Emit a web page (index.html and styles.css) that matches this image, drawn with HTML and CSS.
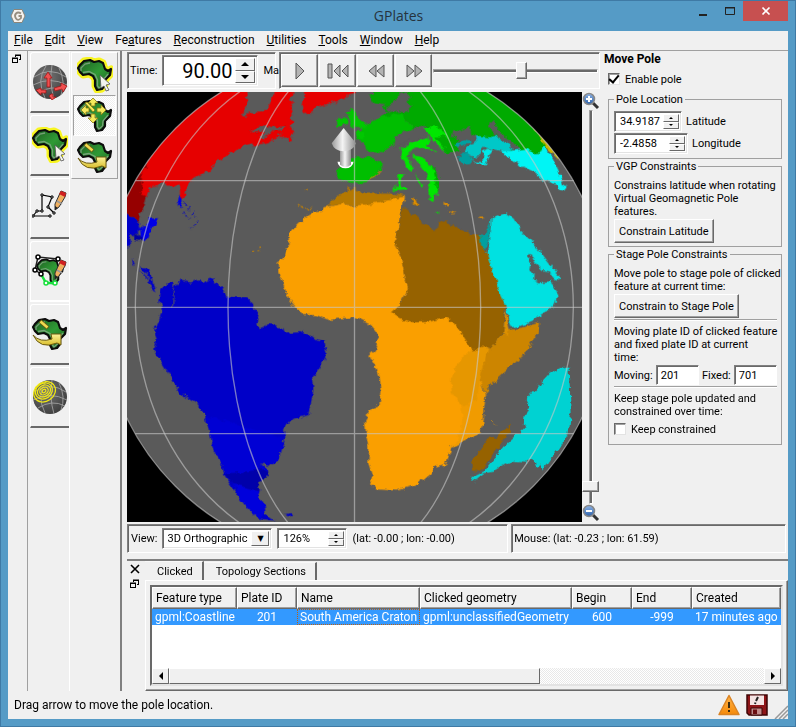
FILE: index.html
```html
<!DOCTYPE html>
<html lang="en">
<head>
<meta charset="utf-8">
<title>GPlates</title>
<link rel="stylesheet" href="styles.css">
</head>
<body>
<svg class="defs" aria-hidden="true">
  <defs>
    <linearGradient id="leaf" x1="0" y1="0" x2="1" y2="1"><stop offset="0" stop-color="#1f5e22"/><stop offset=".5" stop-color="#2f9a35"/><stop offset="1" stop-color="#1d5a20"/></linearGradient>
    <linearGradient id="gold" x1="0" y1="0" x2="0" y2="1"><stop offset="0" stop-color="#fbf39a"/><stop offset="1" stop-color="#d9bd2a"/></linearGradient>
    <linearGradient id="steel" x1="0" y1="0" x2="1" y2="0"><stop offset="0" stop-color="#9a9a9a"/><stop offset=".45" stop-color="#f4f4f4"/><stop offset="1" stop-color="#8c8c8c"/></linearGradient>
    <radialGradient id="ball" cx=".4" cy=".35" r=".7"><stop offset="0" stop-color="#777"/><stop offset="1" stop-color="#3c3c3c"/></radialGradient>
    <linearGradient id="lens" x1="0" y1="0" x2="0" y2="1"><stop offset="0" stop-color="#8db4e6"/><stop offset="1" stop-color="#2b5fa8"/></linearGradient>
    <linearGradient id="amber" x1="0" y1="0" x2="0" y2="1"><stop offset="0" stop-color="#ffb347"/><stop offset="1" stop-color="#f58a0a"/></linearGradient>
    <path id="africa" d="M3 8 L7 4 L13 3 L17 5 L22 4 L26 6 L28 12 L31 14 L34 12 L33 18 L28 23 L28 28 L25 32 L20 33 L18 29 L18 23 L16 19 L12 17 L6 18 L3 15 L1 11 Z"/>
    <g id="land"><use href="#africa" fill="url(#leaf)" stroke="#0c0c0c" stroke-width="2.200" stroke-linejoin="round"/><path d="M4 14 L4 11 L8 7 L13 6 M6 15.500 L12 14.500 L18 17.500 L20.500 23 L20.500 29 L22 31 L25.500 28 L26 23 L31 17" fill="none" stroke="#8fae90" stroke-opacity=".75" stroke-width="1.300"/></g>
    <g id="globe">
      <circle cx="18" cy="18" r="17" fill="url(#ball)"/>
      <g fill="none" stroke="#aaa" stroke-width=".8"><path d="M2 13 Q18 2 34 13M1 21 Q18 12 35 21M6 29 Q20 20 33 27M14 2 Q4 16 13 34M20 1 Q17 18 22 35M27 4 Q34 18 29 31"/></g>
    </g>
    <path id="pointer" d="M0 0 L10 9 L6 10 L9 15 L6 16 L4 11 L1 13 Z" fill="#f3f3ee" stroke="#555" stroke-width=".8"/>
    <g id="pencil"><path d="M29 1 L34 3 L33 7 L27 17 L23 20 L23 14 Z" fill="#f0b060" stroke="#333" stroke-width="1"/><path d="M29 1 L34 3 L33 7 L27 4 Z" fill="#d02020"/><path d="M25 11 L30 14" stroke="#999" stroke-width="1.5"/><path d="M23 16 L23 20 L26 18" fill="#222"/></g>
    <g id="africa-pick"><use href="#africa" fill="none" stroke="#f8f520" stroke-width="7" stroke-linejoin="round"/><use href="#land"/><use href="#pointer" x="23" y="18"/></g>
    <g id="africa-turn"><use href="#land"/><path d="M8 5 L16 12" stroke="#6b5a10" stroke-width="4"/><path d="M8.500 5.500 L15.500 11.500" stroke="#f0dc50" stroke-width="2.500"/><path d="M1 19 Q8 27 20 23 L19 18 H29 V29 L25 27 Q8 34 1 19Z" fill="url(#gold)" stroke="#6b5a10" stroke-width="1"/></g>
    <g id="restore" fill="none" stroke="#000"><path d="M3.500 3V1M3 1.500H9M3 1H9M8.500 1V6M9 5.500H7M.5 4V9M0 4.500H6M0 4H6M5.500 4V9M6 8.500H0"/></g>
  </defs>
</svg>
<div class="window">
  <header class="titlebar">
    <svg class="app-icon" viewBox="0 0 16 16"><path d="M4 1.500H12L15 8L12 14.500H4L1 8Z" fill="#f4f2ee" stroke="#8a857a"/><path d="M11 5.500Q8 3.500 6 5.500T6 10.500T11 10V8H8.500" fill="none" stroke="#968e80" stroke-width="1.800"/></svg>
    <h1>GPlates</h1>
    <div class="window-buttons">
      <button aria-label="Minimize"><svg viewBox="0 0 12 12"><path d="M2 10H10" stroke="#222" stroke-width="2"/></svg></button>
      <button aria-label="Maximize"><svg viewBox="0 0 12 12"><path d="M1.500 2V9.500H10.500V2M1 2.500H11M1 3H11" fill="none" stroke="#222"/></svg></button>
      <button class="close" aria-label="Close"><svg viewBox="0 0 12 12"><path d="M2.500 2.500L9.500 9.500M9.500 2.500L2.500 9.500" stroke="#fff" stroke-width="1.700"/></svg></button>
    </div>
  </header>
  <div class="client">
    <nav class="menubar">
      <a href="#"><u>F</u>ile</a><a href="#"><u>E</u>dit</a><a href="#"><u>V</u>iew</a><a href="#">Fe<u>a</u>tures</a><a href="#"><u>R</u>econstruction</a><a href="#"><u>U</u>tilities</a><a href="#"><u>T</u>ools</a><a href="#"><u>W</u>indow</a><a href="#"><u>H</u>elp</a>
    </nav>
    <div class="workspace">
      <aside class="tool-dock">
        <div class="dock-grip"><button aria-label="Float"><svg viewBox="0 0 10 10"><use href="#restore"/></svg></button></div>
        <div class="workflows">
          <button aria-label="View"><svg viewBox="0 0 36 36"><use href="#globe"/><g fill="#f05050" stroke="#a01818" stroke-width=".8"><path d="M15 23V14H12L16 8L20 14H18V23Z"/><path d="M22 24L29 22V19L35 22L31 28L30 25L23 27Z"/><path d="M14 26L9 26V24L4 26L9 31V29L14 29Z"/><path d="M19 30L21 30V33H24L20 36L17 32Z"/></g></svg></button>
          <button aria-label="Feature inspection"><svg viewBox="0 0 36 36"><use href="#africa-pick"/></svg></button>
          <button aria-label="Digitisation"><svg viewBox="0 0 36 36"><g fill="none" stroke="#000" stroke-width="1.200"><path d="M1 26H18M1 26L5 21H10V5L20 7L16 17L22 23"/></g><g fill="#fff" stroke="#000"><path d="M0 25h2v2h-2zM17 25h2v2h-2zM4 20h2v2h-2zM9 20h2v2h-2zM9 4h2v2h-2zM19 6h2v2h-2zM15 16h2v2h-2zM21 22h2v2h-2z"/></g><use href="#pencil"/></svg></button>
          <button class="current" aria-label="Topology"><svg viewBox="0 0 36 36"><use href="#land" transform="translate(4 4) scale(.8)"/><path d="M9 21L3 17L6 4L26 6" fill="none" stroke="#222" stroke-width="1.500"/><path d="M9 21L14 30H23" fill="none" stroke="#17e03c" stroke-width="2.500"/><g fill="#fff" stroke="#000" stroke-width="1.500"><circle cx="3" cy="17" r="2"/><circle cx="6" cy="4" r="2"/><circle cx="26" cy="6" r="2"/><circle cx="9" cy="21" r="2"/></g><g fill="#fff" stroke="#17e03c" stroke-width="1.500"><circle cx="14" cy="30" r="2"/><circle cx="23" cy="30" r="2"/></g><use href="#pencil" y="6"/></svg></button>
          <button aria-label="Pole manipulation"><svg viewBox="0 0 36 36"><use href="#africa-turn"/></svg></button>
          <button aria-label="Small circles"><svg viewBox="0 0 36 36"><use href="#globe"/><g fill="none" stroke="#f2ea10" stroke-width="1.200" transform="rotate(-35 12 12)"><ellipse cx="12" cy="12" rx="2" ry="1.500"/><ellipse cx="12" cy="12" rx="4.500" ry="3.500"/><ellipse cx="12" cy="12" rx="7" ry="5.500"/><ellipse cx="12" cy="12" rx="9" ry="7.500"/><ellipse cx="12" cy="13" rx="11.500" ry="9.500"/></g></svg></button>
        </div>
        <div class="tools">
          <div class="tool-list">
            <button aria-label="Choose feature"><svg viewBox="0 0 36 36"><use href="#africa-pick"/></svg></button>
            <button class="checked" aria-label="Move pole"><svg viewBox="0 0 36 36"><use href="#land"/><g fill="#f4ea5c" stroke="#857a10" stroke-width=".8"><path d="M16 0L21 5H18V8H14V5H11Z"/><path d="M16 25L21 20H18V16H14V20H11Z"/><path d="M4 12L9 7V10H12V14H9V17Z"/><path d="M29 12L24 7V10H20V14H24V17Z"/><path d="M8 5L10 4L18 12L16 14Z"/></g></svg></button>
            <button aria-label="Modify pole"><svg viewBox="0 0 36 36"><use href="#africa-turn"/></svg></button>
          </div>
        </div>
      </aside>
      <main class="center">
        <div class="upper">
          <div class="globe-side">
            <div class="timebar">
              <div class="sunken time-frame">
                <label for="time">Time:</label>
                <span class="spin spin-large"><input id="time" type="text" value="90.00"><span class="arrows"><button aria-label="Older"></button><button aria-label="Younger"></button></span></span>
                <span>Ma</span>
              </div>
              <div class="sunken play-frame">
                <button class="raised" aria-label="Play"><svg viewBox="0 0 30 20"><path d="M11 2V18L19 10Z"/></svg></button>
                <button class="raised" aria-label="Reset"><svg viewBox="0 0 30 20"><path d="M5 3H9V17H5ZM17 4V16L11 10ZM25 4V16L19 10Z"/></svg></button>
                <button class="raised" aria-label="Step back"><svg viewBox="0 0 30 20"><path d="M15 4V16L8 10ZM23 4V16L16 10Z"/></svg></button>
                <button class="raised" aria-label="Step forward"><svg viewBox="0 0 30 20"><path d="M8 4V16L15 10ZM16 4V16L23 10Z"/></svg></button>
                <input class="slider" type="range" min="0" max="100" value="54" aria-label="Time slider">
              </div>
            </div>
            <div class="map-row">
              <div class="map">
              <svg viewBox="3 6 1365 1290" preserveAspectRatio="xMidYMid slice" role="img" aria-label="Globe">
                <clipPath id="disc"><circle cx="685" cy="652" r="759"/></clipPath>
                <filter id="coast" filterUnits="userSpaceOnUse" x="-80" y="-80" width="1540" height="1460"><feTurbulence type="fractalNoise" baseFrequency=".05" numOctaves="3" seed="4"/><feDisplacementMap in="SourceGraphic" scale="20" xChannelSelector="R" yChannelSelector="G"/></filter>
                <circle cx="685" cy="652" r="759" fill="#5a5a5a"/>
                <g clip-path="url(#disc)">
                <g filter="url(#coast)">
                  <path fill="#e60000" d="M260 -20H360L366 15L357 25L370 35L352 60L348 78L362 80L372 66L400 68L418 62L430 45L438 25L450 -20H490L500 15L488 30L503 38L495 45L500 70L490 80L505 90L508 98L490 105L495 115L502 125L490 135L503 148L490 154L480 143L458 140L470 128L440 150L430 160L400 165L380 170V160L360 165L340 175L330 184L310 190L290 208L275 204L265 215L262 232L250 242L230 248L210 262L200 268L190 285L180 300L178 318L170 333L165 320V300L158 283L140 290L125 290L115 278L100 282L75 292L62 318L40 340L40 200Z"/>
                  <path fill="#5a5a5a" d="M368 130L390 115L410 106L440 112L480 108L470 118L455 122L440 120L428 134L412 145L400 140L415 124L395 120Z"/>
                  <path fill="#960000" d="M76 200L48 248L46 312L60 318L52 348L42 372L38 396L-20 350V250Z"/>
                  <path fill="#e60000" d="M532 -20H694L690 12L662 16L660 26L640 32L600 44L575 52L558 64L545 76L530 64L527 45L535 22Z"/>
                  <path fill="#0000c8" d="M-20 350L38 396L40 420L22 440L10 430L12 470L-20 475ZM18 505L26 518L22 530ZM36 536L55 552L70 570L62 566ZM45 530L60 532L76 560L88 610L72 590L70 565Z"/>
                  <path fill="#0000e6" d="M38 410L60 412L75 386L96 384L88 404L74 418L68 440L54 455L42 440ZM160 312L168 325L170 338L160 354L155 345Z"/>
                  <path fill="#0000a0" d="M26 430L46 440L50 454L28 450Z"/>
                  <path fill="none" stroke="#0000c8" stroke-width="4" stroke-dasharray="5 8" d="M176 340L192 350L175 372L190 386M202 368L212 398L196 414"/>
                  <path fill="#0000c8" d="M105 600L135 572L150 590L165 572L190 578L220 568L240 575L266 563L264 580L285 590L300 620L330 622L360 624L380 640L386 662L398 675L388 700L400 714L418 712L425 702L445 704L472 718L475 728L520 723L550 732L570 748L595 752L602 790L585 825L570 850L558 865L562 900L555 940L546 976L520 982L495 988L474 1015L478 1045L465 1075L458 1108L442 1125L405 1120L430 1140L426 1160L396 1170L388 1186L402 1198L396 1222L415 1240L418 1270L445 1292L400 1286L370 1260L345 1230L322 1195L295 1155L285 1120L262 1075L248 1020L235 970L218 945L185 925L158 905L130 855L92 795L85 780L92 750L85 722L98 690L108 665L100 632Z"/>
                  <path fill="#0000dc" opacity=".6" d="M240 975L475 1045L465 1075L458 1108L442 1125L400 1120L430 1140L300 1152L285 1120L262 1075Z"/>
                  <path fill="#0000aa" d="M295 1152L410 1138L430 1145L425 1160L396 1170L400 1205L320 1180Z"/>
                  <path fill="#0000dc" d="M325 1185L400 1205L396 1222L415 1240L418 1270L400 1286L370 1260L345 1230Z"/>
                  <path fill="none" stroke="#5a5a5a" stroke-width="3" d="M148 585L140 610L148 625L140 652M400 716L414 714L420 700"/>
                  <path fill="#0000c8" d="M480 1275L500 1272L498 1280L484 1282Z"/>

                  <path fill="#fa9f00" d="M608 350L592 352L585 365L560 368L540 380L515 400L490 428L492 460L480 480L472 505L455 515L457 545L465 565L475 590L485 620L500 640L530 675L570 675L610 690L650 684L685 683L705 690L735 705L752 725L757 745L747 780L730 795L752 835L760 860L767 900L760 945L737 955L717 990L720 1030L730 1070L727 1120L740 1160L732 1180L747 1198L812 1202L857 1188L892 1170L917 1150L927 1130L957 1122L970 1090L972 1075L1052 1035L1072 1000L1077 920L1062 875L1087 770L1120 640H822L847 600L827 510L807 455L837 318L760 335L690 345L640 343Z"/>
                  <path fill="#b47800" d="M608 348L615 330L640 315L660 305L668 290L672 303L688 292L690 304L720 308L790 308L837 318L770 334L710 345L640 343ZM858 325L872 332L878 346L870 350L858 338Z"/>
                  <path fill="#966200" d="M837 350L852 370L877 380L887 395L922 420L934 412L937 395L962 395L992 412L1032 430L1060 430L1072 470L1082 490L1102 545L1117 590L1140 655L1134 650L1132 725L1112 750L1097 773L1087 770L1039 782L1010 735L985 700L962 683L930 690L905 696L862 697L820 684L797 668L822 645L847 600L827 510L807 455L830 365Z"/>
                  <path fill="#cc8500" d="M1087 770L1097 773L1112 750L1132 728L1150 720L1200 710L1240 698L1235 730L1202 785L1162 820L1112 865L1077 908L1060 870L1067 830Z"/>
                  <path fill="#dc9000" d="M1138 655L1150 716L1150 735L1132 728Z"/>
                  <path fill="#e69700" d="M1039 782L1087 770L1062 870L1057 910L1047 930L1007 950L977 905L975 870L990 830L1017 795Z"/>
                  <path fill="#f09b00" d="M1007 950L1047 930L1064 875L1077 920L1072 1000L1052 1035L972 1075L992 1050L1012 1000Z"/>
                  <g transform="translate(672 630)">
                    <path fill="#966200" d="M365 490L375 470L400 440L410 420L440 410L480 375L482 390L460 425L430 460L395 510L380 515L365 510Z"/>
                    <path fill="#00d2d2" d="M363 532L400 515L460 440L530 375L515 372L518 350L526 345L532 330L538 318L530 300L565 260L600 220L630 202L655 200L660 270L662 350L655 400L630 445L600 480L580 508L578 492L556 502L550 478L530 488L480 485L430 515L400 520L370 545Z"/>
                    <path fill="none" stroke="#f09b00" stroke-width="3" stroke-dasharray="3 4" d="M404 280L412 300M426 362L438 376"/>
                  </g>
                  <g transform="translate(672 0)">
                    <path fill="#00e1e1" d="M425 385L465 370L490 385L515 425L545 455L575 490L605 530L628 555L628 570L608 566L604 578L625 610L615 640L600 660L575 672L555 692L530 702L485 712L475 680L468 650L445 600L430 550L410 490L420 450Z"/>
                    <path fill="#5a5a5a" d="M535 492L546 494L554 520L575 540L600 544L604 556L622 576L608 584L598 572L590 578L565 580L552 572L554 558L538 540L542 518L534 508Z"/>
                    <path fill="#00a0a0" d="M388 434L402 434L415 410L422 395L418 450L405 480L392 460Z"/>
                    <path fill="#00aa00" d="M55 15L75 10L85 -20H415L500 35L555 98L580 125L600 165L580 188L565 193L545 185L530 178L518 190L495 165L465 140L440 115L436 96L420 94L418 112L440 130L495 190L410 145L360 130L358 108L335 125L310 120L305 140L325 150L325 185L295 190L270 165L245 140L235 110L205 108L190 120L165 88L140 85L100 80L115 65L95 58L112 46L70 40Z"/>
                    <path fill="#5a5a5a" d="M116 48L145 15L168 6L185 18L168 38L185 48L175 66L145 62L120 66L108 56ZM418 95L436 96L440 118L465 140L490 160L520 188L505 190L470 165L440 135L418 115Z"/>
                    <path fill="#00be00" d="M160 68L165 88L190 122L160 126L135 138L130 165L110 176L100 190L50 185L45 160L20 145L35 115L75 90L100 80ZM-40 265L-34 235L-12 215L18 198L40 202L75 205L95 220L94 235L70 262L50 276L25 282L-5 276Z"/>
                    <path fill="#5a5a5a" d="M190 118L215 106L235 112L222 125L226 138L190 150L155 160L140 172L128 170L138 140Z"/>
                    <path fill="#00e600" d="M150 180L180 160L205 150L235 140L240 155L232 165L256 188L225 175L200 172L180 180L168 196L186 225L188 245L176 240L150 195ZM220 112L260 112L280 125L300 142L310 165L285 163L260 145L290 188L270 172L245 145ZM185 195L210 200L240 222L262 250L266 290L262 322L255 312L250 338L240 320L235 280L230 252L208 222ZM145 255L162 250L155 270L155 288L172 290L172 298L145 300L125 298L145 284ZM200 250L205 270L220 285L214 290L200 268ZM255 365L268 368L266 376Z"/>
                    <path fill="#00c800" d="M-40 95L-22 80L-8 84L-10 104L-34 110ZM-12 70L8 52L12 68L20 85L46 98L48 116L20 110L5 112L-2 82ZM14 125L42 120L40 148L25 142Z"/>
                    <path fill="#00aa00" d="M245 225L264 250L266 310L255 290L256 260ZM256 140L300 140L316 180L290 188Z"/>
                    <path fill="#00c8c8" d="M375 135L412 142L440 138L475 160L488 178L470 185L440 180L415 175L400 170L388 195L370 200L342 188L355 165L378 160Z"/>
                    <path fill="#00a0a0" d="M316 160L342 148L365 152L360 160L325 168ZM328 195L352 190L370 205L358 222L340 224L330 212Z"/>
                    <path fill="#00e8e8" d="M360 205L380 215L396 216L400 198L398 185L412 176L428 180L416 198L408 222L390 224Z"/>
                    <path fill="#00f5f5" d="M455 185L500 180L530 176L565 194L582 168L600 190L625 240L640 285L650 292L640 305L628 302L622 285L580 270L545 242L512 228L500 215L480 208Z"/>
                    <path fill="#c8b400" d="M535 90L580 110L640 212L632 212L590 172L575 148Z"/>
                    <path fill="#e08f00" d="M280 332L296 345L292 350L282 344ZM300 363L314 369L302 370ZM388 380L402 380L400 386H388ZM358 358L364 364ZM185 326L200 334L204 348L190 340Z"/>
                    <path fill="none" stroke="#e08f00" stroke-width="3" d="M58 270L95 240"/>
                  </g>
                  <path fill="none" stroke="#c88400" stroke-width="4" stroke-dasharray="9 5" d="M516 344L535 356L560 352M376 486L386 484M400 466V484M540 298H544"/>
                </g>
                </g>
                <g class="graticule">
                  <path d="M28 272H1343M-74 652H1444M28 1031H1343M685.500 -100V1400"/>
                  <ellipse cx="685" cy="652" rx="379" ry="759"/><ellipse cx="685" cy="652" rx="657" ry="759"/><circle cx="685" cy="652" r="759"/>
                </g>
                <path d="M638 215A20 16 0 0 0 679 215" fill="none" stroke="#fff" stroke-width="7"/>
                <path d="M642 175V224Q659 238 675 224V175Z" fill="url(#steel)"/>
                <path d="M653 114L617 160Q625 184 653 184T690 160Z" fill="url(#steel)"/>
              </svg>
              </div>
              <div class="zoom">
                <svg viewBox="0 0 18 18"><path d="M11 11L16 16" stroke="#333" stroke-width="3"/><circle cx="7" cy="7" r="5.500" fill="url(#lens)" stroke="#888" stroke-width="1.500"/><path d="M7 4V10M4 7H10" stroke="#fff" stroke-width="2"/></svg>
                <input class="slider vertical" type="range" min="0" max="100" value="3" aria-label="Zoom">
                <svg viewBox="0 0 18 18"><path d="M11 11L16 16" stroke="#333" stroke-width="3"/><circle cx="7" cy="7" r="5.500" fill="url(#lens)" stroke="#888" stroke-width="1.500"/><path d="M4 7H10" stroke="#fff" stroke-width="2"/></svg>
              </div>
            </div>
          </div>
          <section class="pole-panel">
            <h2>Move Pole</h2>
            <label class="check"><input type="checkbox" checked>Enable pole</label>
            <fieldset>
              <legend>Pole Location</legend>
              <div class="field"><span class="spin lat"><input id="lat" type="text" value="34.9187"><span class="arrows"><button aria-label="Up"></button><button aria-label="Down"></button></span></span><label for="lat">Latitude</label></div>
              <div class="field"><span class="spin lon"><input id="lon" type="text" value="-2.4858"><span class="arrows"><button aria-label="Up"></button><button aria-label="Down"></button></span></span><label for="lon">Longitude</label></div>
            </fieldset>
            <fieldset>
              <legend>VGP Constraints</legend>
              <p>Constrains latitude when rotating<br>Virtual Geomagnetic Pole<br>features.</p>
              <button class="raised push">Constrain Latitude</button>
            </fieldset>
            <fieldset>
              <legend>Stage Pole Constraints</legend>
              <p>Move pole to stage pole of clicked<br>feature at current time:</p>
              <button class="raised push">Constrain to Stage Pole</button>
              <hr>
              <p>Moving plate ID of clicked feature<br>and fixed plate ID at current<br>time:</p>
              <div class="plates"><label for="moving">Moving:</label><input id="moving" type="text" value="201"><label for="fixed">Fixed:</label><input id="fixed" type="text" value="701"></div>
              <hr>
              <p>Keep stage pole updated and<br>constrained over time:</p>
              <label class="check"><input type="checkbox">Keep constrained</label>
            </fieldset>
          </section>
        </div>
        <div class="viewbar">
          <div class="sunken view-frame">
            <label for="projection">View:</label>
            <span class="combo"><select id="projection"><option>3D Orthographic</option></select></span>
            <span class="spin percent"><input type="text" value="126%" aria-label="Zoom percent"><span class="arrows"><button aria-label="Up"></button><button aria-label="Down"></button></span></span>
            <span>(lat: -0.00 ; lon: -0.00)</span>
          </div>
          <div class="sunken mouse-frame">Mouse: (lat: -0.23 ; lon: 61.59)</div>
        </div>
        <section class="feature-dock">
          <div class="dock-buttons">
            <button aria-label="Close dock"><svg viewBox="0 0 10 10"><path d="M1 1L9 9M9 1L1 9" stroke="#000" stroke-width="1.600"/></svg></button>
            <button aria-label="Float dock"><svg viewBox="0 0 10 10"><use href="#restore"/></svg></button>
          </div>
          <div class="tabbed">
            <div class="tabs"><button class="active">Clicked</button><button>Topology Sections</button></div>
            <div class="pane">
              <div class="table-frame">
                <table>
                  <colgroup><col class="c-type"><col class="c-id"><col class="c-name"><col class="c-geom"><col class="c-id"><col class="c-id"><col></colgroup>
                  <thead><tr><th>Feature type</th><th>Plate ID</th><th>Name</th><th>Clicked geometry</th><th>Begin</th><th>End</th><th>Created</th></tr></thead>
                  <tbody><tr><td>gpml:Coastline</td><td class="mid">201</td><td class="focus">South America Craton</td><td>gpml:unclassifiedGeometry</td><td class="mid">600</td><td class="mid">-999</td><td>17 minutes ago</td></tr></tbody>
                </table>
                <div class="scrollbar"><button class="left" aria-label="Scroll left"></button><span class="thumb"></span><button class="right" aria-label="Scroll right"></button></div>
              </div>
            </div>
          </div>
        </section>
      </main>
    </div>
    <footer class="statusbar">
      <span>Drag arrow to move the pole location.</span>
      <svg viewBox="0 0 22 22"><path d="M11 1.500L21 20.500H1Z" fill="url(#amber)" stroke="#d98324" stroke-width="1.500" stroke-linejoin="round"/><path d="M11 8V14M11 16V18" stroke="#3a2a10" stroke-width="2"/></svg>
      <svg viewBox="0 0 22 22"><path d="M1 1H21V21H3L1 19Z" fill="#8e1518" stroke="#3d0606" stroke-width="1.500"/><path d="M4 1.500H18V11H4Z" fill="#f4e4e4"/><path d="M12 3L10 7M9.500 8.500L9 10" stroke="#222" stroke-width="2"/><path d="M5 14H16V21H5Z" fill="#c08a8a" stroke="#3d0606"/><path d="M7 15.500H11V20H7Z" fill="#6a0d10"/></svg>
      <svg class="grip" viewBox="0 0 14 14"><path d="M1 14L14 1M5 14L14 5M9 14L14 9" stroke="#999" stroke-width="1.500"/></svg>
    </footer>
  </div>
</div>
</body>
</html>
```
FILE: styles.css
```css
* { box-sizing: border-box; }
body { margin: 0; font: 11px/13px Roboto, sans-serif; color: #000; }
button, input, select { font: inherit; color: inherit; margin: 0; padding: 0; }
button { background: #f0f0f0; border: 0; }
svg { display: block; }
.defs { position: absolute; width: 0; height: 0; }

.window { height: 100vh; display: flex; flex-direction: column; padding: 0 7px 7px; background: #559bc6; border: 1px solid #3f7aa5; }
.titlebar { display: flex; height: 30px; flex: none; align-items: center; padding-left: 2px; }
.titlebar h1 { flex: 1; margin: 0; padding-left: 82px; text-align: center; font: 14px/20px "Open Sans", sans-serif; color: #26333d; }
.app-icon { width: 16px; height: 16px; }
.window-buttons { display: flex; align-self: flex-start; }
.window-buttons button { width: 27px; height: 20px; display: grid; place-items: center; background: none; }
.window-buttons svg { width: 12px; height: 12px; }
.window-buttons .close { width: 45px; background: #c75050; }

.client { flex: 1; min-height: 0; display: flex; flex-direction: column; background: #f0f0f0; }
.menubar { display: flex; gap: 12px; height: 20px; flex: none; padding: 0 6px; border-bottom: 1px solid #a0a0a0; font: 12px/19px Roboto, sans-serif; }
.menubar a { color: #000; text-decoration: none; }
.workspace { flex: 1; min-height: 0; display: flex; gap: 5px; }

.tool-dock { flex: none; width: 114px; display: flex; border-right: 2px solid #808080; }
.dock-grip { width: 20px; padding: 3px 4px; border-right: 1px solid #a0a0a0; }
.dock-grip button { display: block; }
.dock-grip svg, .dock-buttons svg { width: 10px; height: 10px; }
.workflows { width: 42px; padding: 1px 0 0 2px; border-right: 1px solid #fff; display: flex; flex-direction: column; gap: 2px; }
.workflows button { height: 61px; display: grid; place-items: center; border-left: 1px solid #fff; border-top: 1px solid #fff; border-bottom: 2px solid #696969; border-radius: 3px 0 0 0; }
.workflows .current { border-bottom-color: #fff; }
.workflows svg, .tools svg { width: 36px; height: 36px; }
.tools { flex: 1; padding: 1px 2px 0 1px; }
.tool-list { border: 1px solid #fff; border-right-color: #a0a0a0; border-bottom: 1px solid #a0a0a0; padding: 1px; display: grid; gap: 0; }
.tool-list button { height: 41px; display: grid; place-items: center; border: 1px solid transparent; }
.tool-list .checked { border-color: #a0a0a0 #fff #fff #a0a0a0; background: repeating-conic-gradient(#fff 0 25%, #f0f0f0 0 50%) 0 0 / 2px 2px; }

.center { flex: 1; min-width: 0; display: flex; flex-direction: column; }
.upper { flex: 1; min-height: 0; display: grid; grid-template-columns: 1fr 184px; gap: 4px; }
.globe-side { min-width: 0; min-height: 0; display: flex; flex-direction: column; gap: 3px; padding-top: 1px; }
.sunken { border: 1px solid; border-color: #808080 #fff #fff #808080; box-shadow: inset 1px 1px #696969; display: flex; align-items: center; }
.timebar { display: flex; gap: 3px; height: 37px; flex: none; }
.time-frame { width: 149px; gap: 5px; padding-left: 2px; }
.play-frame { flex: 1; gap: 1px; padding: 1px; }
.raised { border: 1px solid; border-color: #fff #696969 #696969 #fff; box-shadow: inset -1px -1px #a0a0a0; }
.play-frame .raised { width: 37px; height: 33px; display: grid; place-items: center; }
.play-frame svg { width: 30px; height: 20px; fill: #b4b4b4; stroke: #555; }

.spin, .combo { display: inline-flex; height: 21px; background: #fff; border: 1px solid; border-color: #808080 #fff #fff #808080; box-shadow: inset 1px 1px #696969, inset -1px -1px #e3e3e3; padding: 2px; }
.spin input { flex: 1; min-width: 0; border: 0; background: none; padding-left: 3px; }
.arrows { display: flex; flex-direction: column; width: 16px; }
.arrows button { flex: 1; min-height: 0; display: grid; place-items: center; border: 1px solid; border-color: #fff #696969 #696969 #fff; }
.arrows button::before { content: ""; border: 2px solid transparent; border-top: 0; border-bottom: 2px solid #000; }
.arrows button:last-child::before { border-bottom: 0; border-top: 2px solid #000; }
.spin-large { width: 96px; height: 31px; }
.spin-large input { font-size: 20px; text-align: right; padding-right: 3px; }
.spin-large .arrows { width: 20px; }
.spin-large .arrows button::before { border-width: 0 4px 4px; }
.spin-large .arrows button:last-child::before { border-width: 4px 4px 0; }
.lat { width: 68px; }
.lon { width: 74px; }
.percent { width: 70px; }
.combo { width: 110px; position: relative; }
.combo select { appearance: none; border: 0; background: none; width: 100%; padding-left: 2px; border-radius: 0; }
.combo::after { content: "▼"; position: absolute; right: 2px; top: 2px; bottom: 2px; width: 16px; font: 8px/14px "DejaVu Sans", sans-serif; text-align: center; background: #f0f0f0; border: 1px solid; border-color: #fff #696969 #696969 #fff; pointer-events: none; }

.slider { appearance: none; background: none; }
.play-frame .slider { flex: 1; min-width: 0; height: 20px; }
.slider::-webkit-slider-runnable-track { height: 4px; border: 1px solid; border-color: #a0a0a0 #fff #fff #a0a0a0; background: #696969; background-clip: padding-box; }
.slider::-webkit-slider-thumb { appearance: none; width: 11px; height: 17px; margin-top: -8px; background: #f0f0f0; border: 1px solid; border-color: #fff #696969 #696969 #fff; box-shadow: inset -1px -1px #a0a0a0; }
.vertical { writing-mode: vertical-lr; direction: rtl; flex: 1; min-height: 0; width: 17px; }
.vertical::-webkit-slider-runnable-track { width: 4px; height: auto; }
.vertical::-webkit-slider-thumb { width: 17px; height: 11px; margin: 0 0 0 -8px; }

.map-row { flex: 1; min-height: 0; display: flex; }
.map { flex: 1; min-width: 0; min-height: 0; background: #000; }
.map svg { width: 100%; height: 100%; }
.graticule { fill: none; stroke: #c8c8c8; stroke-opacity: .6; stroke-width: 4; }
.zoom { width: 18px; display: flex; flex-direction: column; align-items: center; }
.zoom svg { width: 18px; height: 18px; flex: none; }

.pole-panel { padding: 1px 6px 0 4px; }
.pole-panel h2 { margin: 0 0 6px -4px; font-size: 12px; line-height: 14px; }
.check { display: flex; align-items: center; gap: 5px; height: 14px; }
.check input { appearance: none; width: 12px; height: 12px; background: #fff; border: 1px solid; border-color: #696969 #e3e3e3 #e3e3e3 #696969; box-shadow: inset 1px 1px #a0a0a0; display: grid; place-items: center; }
.check input:checked::before { content: ""; width: 4px; height: 8px; margin-top: -3px; border: solid #000; border-width: 0 2px 2px 0; transform: rotate(40deg); }
fieldset { margin: 0 0 1px; padding: 5px 4px 3px 5px; border: 1px solid #a0a0a0; min-width: 0; }
fieldset:last-child { padding-bottom: 8px; }
.pole-panel > .check { margin-bottom: 7px; }
legend { padding: 0 2px; margin-left: 0; height: 13px; }
.field { display: flex; align-items: center; gap: 4px; margin-bottom: 1px; }
fieldset p { margin: 1px 0; white-space: nowrap; }
.push { height: 24px; padding: 0 4px; }
fieldset hr { margin: 1px 0 4px; border: 0; border-top: 1px solid #a0a0a0; border-bottom: 1px solid #fff; }
.plates { display: flex; align-items: center; gap: 3px; }
.plates input { flex: 1; min-width: 0; height: 20px; padding-left: 4px; background: #fff; border: 1px solid; border-color: #808080 #fff #fff #808080; box-shadow: inset 1px 1px #696969; }
fieldset .check { margin-top: 4px; }

.viewbar { flex: none; display: flex; gap: 3px; padding: 2px 2px 6px 0; border-bottom: 2px solid #808080; }
.viewbar .sunken { height: 29px; }
.view-frame { flex: 382; gap: 5px; padding-left: 3px; }
.mouse-frame { flex: 275; padding-left: 2px; }

.feature-dock { flex: none; display: flex; height: 130px; }
.dock-buttons { width: 18px; padding: 3px 3px; display: grid; gap: 5px; align-content: start; }
.dock-buttons button { display: block; }
.tabbed { flex: 1; min-width: 0; display: flex; flex-direction: column; }
.tabs { display: flex; height: 19px; align-items: flex-end; }
.tabs button { height: 18px; padding: 0 9px 0 12px; border-right: 2px solid #696969; border-top: 1px solid #f8f8f8; }
.tabs .active { height: 19px; }
.pane { flex: 1; min-height: 0; padding: 4px; border: 1px solid; border-color: #fff #696969 #696969 #fff; box-shadow: inset -1px -1px #a0a0a0; }
.table-frame { height: 100%; display: flex; flex-direction: column; justify-content: space-between; border: 2px solid; border-color: #696969 #e3e3e3 #e3e3e3 #696969; background: #fff; }
table { width: 100%; table-layout: fixed; border-collapse: separate; border-spacing: 0; font: 12px/15px Roboto, sans-serif; white-space: nowrap; }
th { height: 22px; padding: 0 3px; text-align: left; font-weight: 400; background: #f0f0f0; border: 1px solid; border-color: #fff #696969 #696969 #fff; box-shadow: inset -1px -1px #a0a0a0; }
td { height: 16px; padding: 0 3px; background: #3399ff; color: #fff; }
td.mid { text-align: center; }
td.focus { outline: 1px dotted #c06010; outline-offset: -1px; }
.c-type { width: 85px; } .c-id { width: 60px; } .c-name { width: 123px; } .c-geom { width: 152px; }
.scrollbar { display: flex; height: 16px; background: repeating-conic-gradient(#fff 0 25%, #e8e8e8 0 50%) 0 0 / 2px 2px; }
.scrollbar button, .thumb { border: 1px solid; border-color: #fff #696969 #696969 #fff; background: #f0f0f0; }
.scrollbar button { width: 17px; display: grid; place-items: center; }
.scrollbar button::before { content: ""; border: 4px solid transparent; }
.scrollbar .left::before { border-left: 0; border-right-color: #000; }
.scrollbar .right::before { border-right: 0; border-left-color: #000; }
.thumb { width: 59%; margin-right: auto; }

.statusbar { flex: none; height: 28px; display: flex; align-items: center; gap: 6px; padding-left: 6px; font: 12px/16px Roboto, sans-serif; }
.statusbar span { flex: 1; }
.statusbar svg { width: 22px; height: 22px; }
.statusbar .grip { width: 14px; height: 14px; align-self: flex-end; }
```
